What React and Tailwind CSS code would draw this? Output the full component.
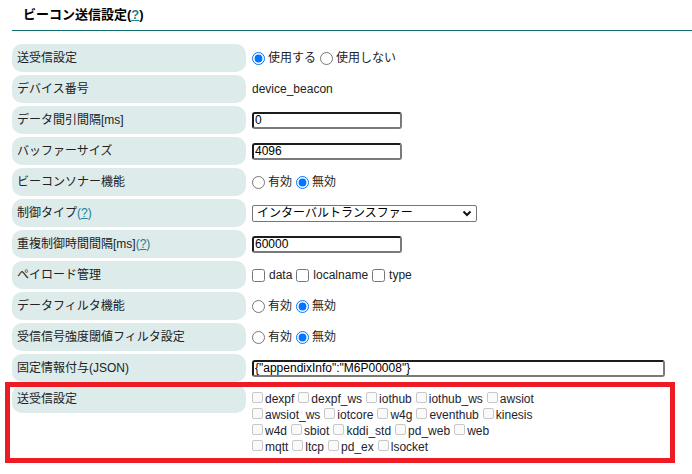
import { useState } from 'react';

const font = { fontFamily: '"Liberation Sans", "Noto Sans CJK JP", sans-serif' };

const Help = ({ parens = true }) => (
  <span className="text-[#1f7f8f]">
    (<span className="underline">?</span>)
  </span>
);

const Row = ({ label, children }) => (
  <div className="flex items-start">
    <div className="w-[234px] h-[28px] shrink-0 rounded-[10px] bg-[#ddebeb] pl-[5px] flex items-center">
      {label}
    </div>
    <div className="pl-[6px] h-[28px] flex items-center">{children}</div>
  </div>
);

const Radio = ({ name, options, value }) => (
  <div className="flex items-center">
    {options.map((opt, i) => (
      <label key={opt} className={`flex items-center ${i > 0 ? 'ml-[4px]' : ''}`}>
        <input
          type="radio"
          name={name}
          defaultChecked={opt === value}
          className="w-[13px] h-[13px] m-0 mr-[3px]"
        />
        {opt}
      </label>
    ))}
  </div>
);

const TextBox = ({ value, width = 'w-[150px]' }) => (
  <input
    type="text"
    defaultValue={value}
    className={`${width} h-[17px] border-2 border-t-[#1c1c1c] border-l-[#1c1c1c] border-b-[#7a7a7a] border-r-[#7a7a7a] rounded-[3px] px-[1px] text-[12px] leading-[13px] text-black bg-white`}
  />
);

const lines = [
  ['dexpf', 'dexpf_ws', 'iothub', 'iothub_ws', 'awsiot'],
  ['awsiot_ws', 'iotcore', 'w4g', 'eventhub', 'kinesis'],
  ['w4d', 'sbiot', 'kddi_std', 'pd_web', 'web'],
  ['mqtt', 'ltcp', 'pd_ex', 'lsocket'],
];

export default function App() {
  const [control, setControl] = useState('インターバルトランスファー');

  return (
    <div className="w-[692px] h-[474px] bg-white text-[12px] text-[#222]" style={font}>
      <div className="ml-[12px] h-[31px] border-b border-[#0f6e6e] pl-[11px] flex items-center text-[13px] font-bold text-black">
        ビーコン送信設定(<span className="text-[#1f7f8f] underline">?</span>)
      </div>

      <div className="ml-[12px] mt-[13px] flex flex-col gap-[3px] leading-[16px]">
        <Row label="送受信設定">
          <Radio name="sr" options={['使用する', '使用しない']} value="使用する" />
        </Row>
        <Row label="デバイス番号">
          <span>device_beacon</span>
        </Row>
        <Row label="データ間引間隔[ms]">
          <TextBox value="0" />
        </Row>
        <Row label="バッファーサイズ">
          <TextBox value="4096" />
        </Row>
        <Row label="ビーコンソナー機能">
          <Radio name="sonar" options={['有効', '無効']} value="無効" />
        </Row>
        <Row label={<span>制御タイプ<Help /></span>}>
          <div className="relative w-[225px] h-[17px]">
            <select
              value={control}
              onChange={e => setControl(e.target.value)}
              className="appearance-none w-full h-full border border-[#767676] rounded-[2px] pl-[4px] text-[12px] leading-[15px] bg-white text-black"
            >
              <option>インターバルトランスファー</option>
            </select>
            <svg
              className="absolute right-[5px] top-[4px] w-[10px] h-[9px] pointer-events-none"
              viewBox="0 0 10 9"
            >
              <path d="M1.5 2.5 L5 6 L8.5 2.5" fill="none" stroke="#111" strokeWidth="2" />
            </svg>
          </div>
        </Row>
        <Row label={<span>重複制御時間間隔[ms]<Help /></span>}>
          <TextBox value="60000" />
        </Row>
        <Row label="ペイロード管理">
          <div className="flex items-center">
            {['data', 'localname', 'type'].map((t, i) => (
              <label key={t} className={`flex items-center ${i > 0 ? 'ml-[4px]' : ''}`}>
                <input type="checkbox" className="w-[13px] h-[13px] m-0 mr-[4px]" />
                {t}
              </label>
            ))}
          </div>
        </Row>
        <Row label="データフィルタ機能">
          <Radio name="df" options={['有効', '無効']} value="無効" />
        </Row>
        <Row label="受信信号強度閾値フィルタ設定">
          <Radio name="rssi" options={['有効', '無効']} value="無効" />
        </Row>
        <Row label="固定情報付与(JSON)">
          <TextBox value={'{"appendixInfo":"M6P00008"}'} width="w-[413px]" />
        </Row>

        <div className="relative flex items-start">
          <div className="w-[234px] h-[28px] shrink-0 rounded-[10px] bg-[#ddebeb] pl-[5px] flex items-center">
            送受信設定
          </div>
          <div className="pl-[6px] pt-[6px] flex flex-col text-[#1e1e2e]">
            {lines.map((line, li) => (
              <div key={li} className="h-[16px] leading-[16px] whitespace-nowrap">
                {line.map((t, i) => (
                  <span key={t} className={i > 0 ? 'ml-[4px]' : ''}>
                    <span className="inline-block w-[11px] h-[11px] mr-[2px] border border-[#c8c8c8] rounded-[2px] bg-[#fafafa] align-baseline" />
                    {t}
                  </span>
                ))}
              </div>
            ))}
          </div>
          <div className="absolute left-[-7px] top-[-3px] w-[670px] h-[81px] border-[5px] border-[#ed1c24] pointer-events-none" />
        </div>
      </div>
    </div>
  );
}
